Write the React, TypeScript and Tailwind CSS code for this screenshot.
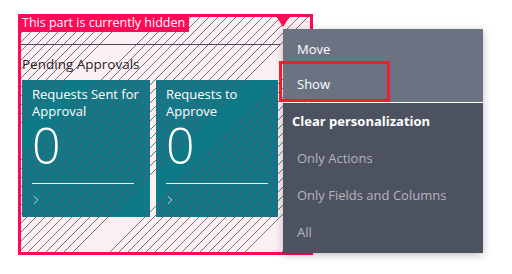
import { ChevronRight } from 'lucide-react';

const tiles = [
  { title: ['Requests Sent for', 'Approval'], value: '0', width: 'w-[128px]' },
  { title: ['Requests to', 'Approve'], value: '0', width: 'w-[122px]' },
];

const hatch =
  'bg-[image:repeating-linear-gradient(135deg,transparent_0_5.8px,rgba(70,70,80,0.75)_5.8px_6.4px)] bg-fixed';
const tileHatch =
  'bg-[image:repeating-linear-gradient(135deg,transparent_0_5.8px,rgba(170,50,90,0.55)_5.8px_6.4px)] bg-fixed';

export default function App() {
  return (
    <div className="relative w-[512px] h-[274px] bg-white font-['Open_Sans',sans-serif] overflow-hidden">
      {/* Hidden part */}
      <div className="relative ml-[18px] mt-[14px] w-[295px] h-[241px] border-[3px] border-[#ff0a54] bg-[#fdf0f5]">
        <div className={`h-full w-full ${hatch}`}>
          <div className="pt-[27px] w-[259px]">
            <div className="h-px bg-[#4b4b5c]" />
            <p className="mt-[10px] ml-px text-[13.5px] leading-[18px] font-medium text-[#262626]">Pending Approvals</p>
            <div className="mt-[7px] ml-px flex gap-[6px]">
              {tiles.map((t, i) => (
                <div key={i} className={`${t.width} h-[137px] bg-[#0f7a87] ${tileHatch} text-white px-[10px] pt-[6px]`}>
                  <p className="text-[13px] leading-[17px]">
                    {t.title[0]}
                    <br />
                    {t.title[1]}
                  </p>
                  <p className="text-[50px] leading-[50px] font-light">{t.value}</p>
                  <div className="mt-[13px] h-px w-[102px] bg-white/90" />
                  <ChevronRight className="mt-[9px] -ml-[3px] w-[14px] h-[14px]" strokeWidth={1.3} />
                </div>
              ))}
            </div>
          </div>
        </div>

        {/* Label */}
        <div className="absolute -left-[3px] -top-[3px] h-[18px] px-[4px] bg-[#ff0a54] text-white text-[12.5px] leading-[18px]">
          This part is currently hidden
        </div>
        {/* Triangle */}
        <div className="absolute left-[255px] -top-px w-0 h-0 border-l-[7px] border-r-[7px] border-t-[11px] border-l-transparent border-r-transparent border-t-[#ff0a54]" />
      </div>

      {/* Context menu */}
      <div className="absolute left-[283px] top-[29px] w-[200px] shadow-[0_2px_8px_rgba(0,0,0,0.25)] text-[13px]">
        <div className="bg-[#6b7383] pt-[3px]">
          <div className="h-[36px] pl-[14px] flex items-center text-white">Move</div>
          <div className="h-[34px] pl-[14px] flex items-center text-white">Show</div>
        </div>
        <div className="h-px bg-white/80" />
        <div className="bg-[#4d5260] pb-[2px]">
          <div className="h-[37px] pl-[9px] flex items-center font-bold text-white">Clear personalization</div>
          <div className="h-[37px] pl-[14px] flex items-center text-[#b3b6bd]">Only Actions</div>
          <div className="h-[37px] pl-[14px] flex items-center text-[#b3b6bd]">Only Fields and Columns</div>
          <div className="h-[37px] pl-[14px] flex items-center text-[#b3b6bd]">All</div>
        </div>
      </div>

      {/* Highlight */}
      <div className="absolute left-[279px] top-[61px] w-[111px] h-[41px] border-[3px] border-[#e5232b]" />
    </div>
  );
}
